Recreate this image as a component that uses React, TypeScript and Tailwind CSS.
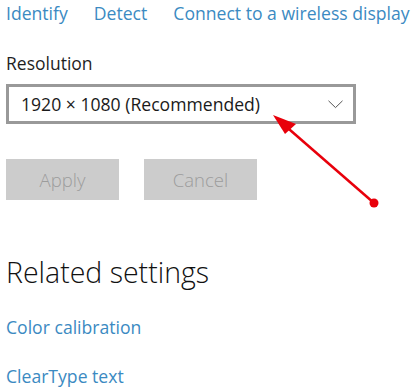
const font = { fontFamily: "'Open Sans', 'Noto Sans', sans-serif" };

export default function App() {
  return (
    <div className="relative w-[413px] h-[390px] bg-white overflow-hidden" style={font}>
      <div className="flex flex-col pl-[6px]">
        {/* Top links */}
        <div className="flex items-center gap-[26px] h-[26px] text-[17.6px] text-[#3b8ac2] whitespace-nowrap">
          <span>Identify</span>
          <span>Detect</span>
          <span>Connect to a wireless display</span>
        </div>

        {/* Resolution */}
        <div className="mt-[25px] text-[17.5px] text-[#1f1f1f] leading-[24px]">Resolution</div>
        <div className="mt-[9px] w-[350px] h-[40px] border-[3px] border-[#999999] flex items-center justify-between pl-[12px] pr-[10px]">
          <span className="text-[17.6px] text-[#1a1a1a]">1920 × 1080 (Recommended)</span>
          <svg width="15" height="9" viewBox="0 0 15 9" className="mt-[1px]">
            <polyline points="0.5,0.8 7.5,7.6 14.5,0.8" fill="none" stroke="#555" strokeWidth="1" />
          </svg>
        </div>

        {/* Buttons */}
        <div className="mt-[35px] flex gap-[25px]">
          <div className="w-[113px] h-[41px] bg-[#cccccc] flex items-center justify-center text-[18.5px] font-light text-[#9c9c9c]">
            Apply
          </div>
          <div className="w-[113px] h-[41px] bg-[#cccccc] flex items-center justify-center text-[18.5px] font-light text-[#9c9c9c]">
            Cancel
          </div>
        </div>

        {/* Related settings */}
        <div className="mt-[54px] text-[28.5px] font-light text-[#111] leading-[36px]">Related settings</div>
        <div className="mt-[25px] text-[17.6px] text-[#3b8ac2] leading-[24px]">Color calibration</div>
        <div className="mt-[25px] text-[17.6px] text-[#3b8ac2] leading-[24px]">ClearType text</div>
      </div>

      {/* Red annotation arrow */}
      <svg className="absolute left-0 top-0 pointer-events-none" width="413" height="390">
        <line x1="374" y1="203" x2="282" y2="123" stroke="#e8000b" strokeWidth="2.5" />
        <polygon points="273,115 296,124 285,134" fill="#e8000b" />
        <circle cx="374" cy="203" r="4.5" fill="#e8000b" />
      </svg>
    </div>
  );
}
